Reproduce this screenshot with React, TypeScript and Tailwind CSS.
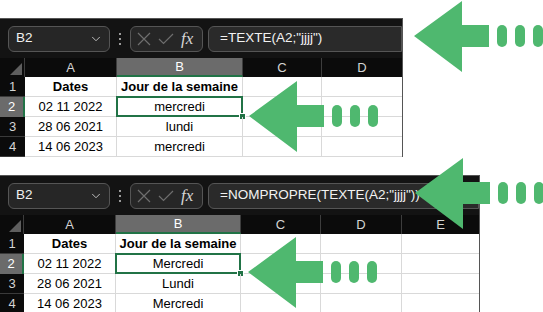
import { ChevronDown } from 'lucide-react';

const GREEN = '#4fb86f';

function Arrow({ className }: { className: string }) {
    return (
        <svg width="130" height="72" viewBox="0 0 130 72" className={`absolute ${className}`}>
            <polygon points="0,35 48,0 48,24 75,24 75,46 48,46 48,71" fill={GREEN} />
            <rect x="83" y="24" width="10" height="22" rx="5" fill={GREEN} />
            <rect x="101" y="24" width="10" height="22" rx="5" fill={GREEN} />
            <rect x="119" y="24" width="10" height="22" rx="5" fill={GREEN} />
        </svg>
    );
}

function FormulaBar({ formula }: { formula: string }) {
    return (
        <div className="h-[39px] bg-[#131313] flex items-center pl-[8px]">
            <div className="w-[102px] h-[26px] rounded-[6px] border border-[#555] bg-[#262626] flex items-center justify-between pl-[7px] pr-[6px]">
                <span className="text-[13.5px] text-[#f0f0f0]">B2</span>
                <ChevronDown size={14} color="#cfcfcf" strokeWidth={1.5} />
            </div>
            <div className="w-[20px] flex flex-col items-center gap-[3px]">
                <span className="w-[2px] h-[2px] bg-[#9a9a9a]" />
                <span className="w-[2px] h-[2px] bg-[#9a9a9a]" />
                <span className="w-[2px] h-[2px] bg-[#9a9a9a]" />
            </div>
            <div className="w-[73px] h-[26px] rounded-[6px] border border-[#555] bg-[#262626] flex items-center pl-[6px] gap-[7px]">
                <svg width="14" height="14" viewBox="0 0 14 14">
                    <path d="M1 1 L13 13 M13 1 L1 13" stroke="#6e6e6e" strokeWidth="1.2" fill="none" />
                </svg>
                <svg width="16" height="12" viewBox="0 0 16 12">
                    <path d="M1 6 L5.5 10.5 L15 1" stroke="#6e6e6e" strokeWidth="1.2" fill="none" />
                </svg>
                <span className="text-[17px] italic text-[#d6d6d6] leading-none font-['Liberation_Serif',serif]">fx</span>
            </div>
            <div className="flex-1 ml-[5px] h-[26px] rounded-l-[6px] border border-[#555] bg-[#2a2a2a] flex items-center pl-[11px]">
                <span className="text-[13.5px] text-[#f2f2f2] whitespace-nowrap">{formula}</span>
            </div>
        </div>
    );
}

function Sheet({ formula, cols, widths, values }: { formula: string; cols: string[]; widths: string; values: string[] }) {
    const rows = [
        ['Dates', 'Jour de la semaine'],
        ['02 11 2022', values[0]],
        ['28 06 2021', values[1]],
        ['14 06 2023', values[2]],
    ];
    return (
        <div className="border-t border-r border-[#555] overflow-hidden">
            <FormulaBar formula={formula} />
            <div className={`grid ${widths} bg-white`}>
                <div className="h-[19px] bg-[#0b0b0b] border-r border-[#3d3d3d] relative">
                    <svg width="12" height="12" viewBox="0 0 12 12" className="absolute right-[2px] bottom-[2px]">
                        <polygon points="12,0 12,12 0,12" fill="#5e5e5e" />
                    </svg>
                </div>
                {cols.map((c) => (
                    <div
                        key={c}
                        className={
                            c === 'B'
                                ? 'h-[19px] bg-[#6b6b6b] border-b-2 border-[#217346] border-r border-r-[#3d3d3d] text-[13px] text-white flex items-center justify-center'
                                : 'h-[19px] bg-[#0b0b0b] border-r border-[#3d3d3d] text-[13px] text-[#d4d4d4] flex items-center justify-center'
                        }
                    >
                        {c}
                    </div>
                ))}
                {rows.map((r, i) => (
                    <div key={i} className="contents">
                        <div
                            className={
                                i === 1
                                    ? 'h-5 bg-[#6b6b6b] border-r-2 border-[#217346] text-[13px] text-white flex items-center justify-center'
                                    : 'h-5 bg-[#0b0b0b] border-b border-[#3a3a3a] text-[13px] text-[#d4d4d4] flex items-center justify-center'
                            }
                        >
                            {i + 1}
                        </div>
                        <div className={`h-5 border-r border-b border-[#d9d9d9] flex items-center justify-center text-[13px] text-black ${i === 0 ? 'font-bold' : ''}`}>
                            {r[0]}
                        </div>
                        <div className={`h-5 border-r border-b border-[#d9d9d9] flex items-center justify-center text-[13px] text-black relative ${i === 0 ? 'font-bold' : ''}`}>
                            {r[1]}
                            {i === 1 && (
                                <>
                                    <span className="absolute -left-px -top-px -right-px -bottom-px border-2 border-[#217346]" />
                                    <span className="absolute -right-[4px] -bottom-[4px] w-[7px] h-[7px] bg-[#217346] border border-white" />
                                </>
                            )}
                        </div>
                        {cols.slice(2).map((c) => (
                            <div key={c} className="h-5 border-r border-b border-[#d9d9d9]" />
                        ))}
                    </div>
                ))}
            </div>
        </div>
    );
}

export default function App() {
    return (
        <div className="relative w-[543px] h-[312px] bg-white overflow-hidden font-['Liberation_Sans',Arial,sans-serif]">
            <div className="w-[403px] mt-[18px]">
                <Sheet
                    formula={'=TEXTE(A2;"jjjj")'}
                    cols={['A', 'B', 'C', 'D']}
                    widths="grid-cols-[25px_92px_126px_79px_81px]"
                    values={['mercredi', 'lundi', 'mercredi']}
                />
            </div>
            <div className="w-[480px] mt-[18px]">
                <Sheet
                    formula={'=NOMPROPRE(TEXTE(A2;"jjjj"))'}
                    cols={['A', 'B', 'C', 'D', 'E']}
                    widths="grid-cols-[24px_92px_125px_80px_81px_78px]"
                    values={['Mercredi', 'Lundi', 'Mercredi']}
                />
            </div>
            <Arrow className="left-[414px] top-[1px]" />
            <Arrow className="left-[249px] top-[81px]" />
            <Arrow className="left-[415px] top-[158px]" />
            <Arrow className="left-[248px] top-[237px]" />
        </div>
    );
}
